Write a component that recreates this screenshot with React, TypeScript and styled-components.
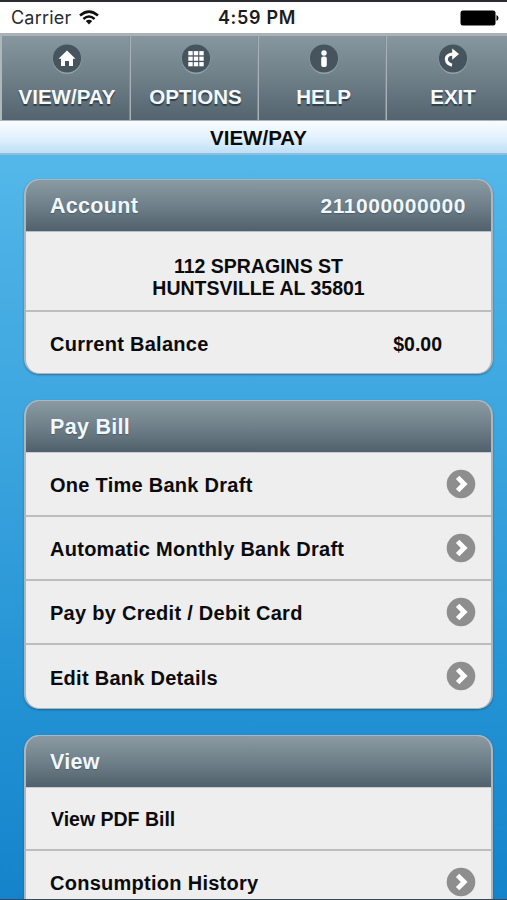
import React from "react";
import styled, { createGlobalStyle } from "styled-components";

const Global = createGlobalStyle`
  * { box-sizing: border-box; }
  html, body { margin: 0; height: 900px; overflow: hidden; }
  body { font-family: "Liberation Sans", Arial, sans-serif; color: #0b0b0d; }
`;

const Screen = styled.div`
  width: 507px;
  height: 900px;
  overflow: hidden;
  display: flex;
  flex-direction: column;
  border-top: 2px solid #2e2c30;
  border-bottom: 1px solid #34495a;
  background: linear-gradient(to bottom, #54b8ea 150px, #49afe4 260px, #3fa7e0 400px, #2191d3 715px, #1583cb 899px);
`;

const StatusBar = styled.header`
  flex: none;
  height: 31px;
  padding: 0 8px 0 11px;
  display: grid;
  grid-template-columns: 1fr auto 1fr;
  align-items: center;
  background: #fff;
  font-family: Inter, sans-serif;
  font-size: 18px;
  line-height: 30px;
`;

const Carrier = styled.div`
  display: flex;
  align-items: center;
  gap: 8px;
  letter-spacing: 0.2px;
  color: #2b2b2d;
`;

const Clock = styled.div`
  font-weight: 600;
  font-size: 18px;
  letter-spacing: 0.7px;
  padding-left: 4px;
  color: #1c1c1e;
`;

const Battery = styled.svg`
  justify-self: end;
`;

const Nav = styled.nav`
  flex: none;
  height: 88px;
  display: grid;
  grid-template-columns: 131px 128px 128px 136px;
  border-top: 3px solid #aab2b7;
  border-bottom: 1px solid #a9b6c0;
  background: linear-gradient(to bottom, #87979f, #6e7f88 50%, #53646f);
`;

const NavItem = styled.div<{ $first?: boolean }>`
  display: flex;
  flex-direction: column;
  align-items: center;
  padding-top: 8px;
  padding-left: 2px;
  border-left: ${(p) => (p.$first ? "2px solid #aeb7bc" : "none")};
  border-right: 1px solid #a6b1b7;
  box-shadow: inset -1px 0 #7f8e96;
  color: #f6faff;
  font-size: 20.5px;
  font-weight: 700;
  line-height: 24px;
  text-shadow: 0 2px 1px #2f3d48;

  &:last-child {
    padding-left: 0;
    padding-right: 3px;
  }
`;

const NavIcon = styled.svg`
  margin-bottom: 11px;
  flex: none;
`;

const TitleBar = styled.h1`
  flex: none;
  height: 34px;
  margin: 0;
  padding-left: 10px;
  border-bottom: 2px solid #90bdd9;
  background: linear-gradient(to bottom, #f8fcff, #e4f2fc 50%, #bfdff6);
  text-align: center;
  font-size: 20.5px;
  line-height: 34px;
`;

const Content = styled.main`
  flex: 1;
  min-height: 0;
  overflow: hidden;
  padding: 24px 14px 0 24px;
  display: flex;
  flex-direction: column;
  gap: 26px;
`;

const Card = styled.section`
  flex: none;
  overflow: hidden;
  border: 1px solid #a9b7c0;
  border-width: 1px 2px;
  border-radius: 15px;
  background: #eee;
  box-shadow: 0 1px 2px rgba(20, 60, 90, 0.5);
`;

const CardHeader = styled.h2`
  height: 51px;
  margin: 0;
  padding: 1px 25px 0 24px;
  display: flex;
  align-items: center;
  justify-content: space-between;
  background: linear-gradient(to bottom, #8b9aa2, #6f808a 50%, #50616d);
  color: #f1f8ff;
  font-size: 21.5px;
  letter-spacing: 0.3px;
  text-shadow: 0 1px 1px #4a5c68;
`;

const AccountNumber = styled.span`
  font-size: 21px;
  letter-spacing: 0.55px;
`;

const Row = styled.div<{ $height: number }>`
  height: ${(p) => p.$height}px;
  padding: 3px 15px 0 24px;
  display: flex;
  align-items: center;
  justify-content: space-between;
  border-top: 2px solid #bbbdbe;
  font-size: 20px;
  font-weight: 700;
  letter-spacing: 0.27px;

  ${CardHeader} + & {
    border-top-width: 1px;
    border-top-color: #c8cccf;
  }
`;

const PlainLabel = styled.span`
  margin: -2px 0 0 1px;
  font-size: 19.5px;
  letter-spacing: 0;
`;

const Address = styled.address`
  height: 79px;
  padding: 23px 0 0;
  border-top: 1px solid #b7bfc4;
  text-align: center;
  font-style: normal;
  font-weight: 700;
  font-size: 19.5px;
  line-height: 22px;
`;

const Amount = styled.span`
  margin-right: 34px;
  font-size: 19.5px;
  letter-spacing: 0;
`;

const Chevron = styled.svg`
  flex: none;
  margin-top: -4px;
`;

const Arrow = () => (
  <Chevron width="30" height="30" viewBox="0 0 30 30">
    <circle cx="15" cy="15" r="14.3" fill="#8e8e8e" />
    <path d="M11.6 8.4 L18.2 15 L11.6 21.6" fill="none" stroke="#fff" strokeWidth="4.8" />
  </Chevron>
);

const icons: Record<string, React.ReactNode> = {
  home: <path d="M15 6.5 L23.5 14.7 H21 V22 H17 V17 H13 V22 H9 V14.7 H6.5 Z" fill="#fff" />,
  grid: (
    <g fill="#fff">
      {[7.3, 12.8, 18.3].map((y) => [7.3, 12.8, 18.3].map((x) => <rect key={`${x}-${y}`} x={x} y={y - 0.2} width="4.4" height="4.2" />))}
    </g>
  ),
  info: (
    <g fill="#fff">
      <circle cx="15" cy="9" r="2.7" />
      <rect x="12.2" y="12.6" width="5.6" height="10.4" rx="2" />
    </g>
  ),
  exit: (
    <g>
      <path d="M14 21.2 C9.2 20.2 7.2 16.2 8.8 13.1 C10 10.9 12.7 10 16 10" fill="none" stroke="#fff" strokeWidth="3.2" />
      <path d="M14.2 4.6 L21 10 L14.2 15.8 Z" fill="#fff" />
    </g>
  ),
};

const navItems = [
  { icon: "home", label: "VIEW/PAY" },
  { icon: "grid", label: "OPTIONS" },
  { icon: "info", label: "HELP" },
  { icon: "exit", label: "EXIT" },
];

const payRows = [
  { label: "One Time Bank Draft", height: 63 },
  { label: "Automatic Monthly Bank Draft", height: 64 },
  { label: "Pay by Credit / Debit Card", height: 64 },
  { label: "Edit Bank Details", height: 65 },
];

export default function App() {
  return (
    <>
      <Global />
      <Screen>
        <StatusBar>
          <Carrier>
            Carrier
            <svg width="20" height="15" viewBox="0 0 20 15">
              <g fill="none" stroke="#111" strokeWidth="2.5">
                <path d="M1 5.5 Q10 -2.3 19 5.5" />
                <path d="M4.4 9 Q10 4 15.6 9" />
              </g>
              <path d="M6.8 11 Q10 8.4 13.2 11 L10 14.5 Z" fill="#111" />
            </svg>
          </Carrier>
          <Clock>4:59 PM</Clock>
          <Battery width="39" height="16" viewBox="0 0 39 16">
            <rect x="0.5" y="0.5" width="35" height="15" rx="2.5" fill="#000" />
            <path d="M36.5 5 Q38.5 6 38.5 8 Q38.5 10 36.5 11 Z" fill="#000" />
          </Battery>
        </StatusBar>
        <Nav>
          {navItems.map((item, i) => (
            <NavItem key={item.icon} $first={i === 0}>
              <NavIcon width="30" height="30" viewBox="0 0 30 30">
                <circle cx="15" cy="15.5" r="14.4" fill="#95a3aa" />
                <circle cx="15" cy="14.5" r="14.1" fill="#46545e" />
                {icons[item.icon]}
              </NavIcon>
              {item.label}
            </NavItem>
          ))}
        </Nav>
        <TitleBar>VIEW/PAY</TitleBar>
        <Content>
          <Card>
            <CardHeader>
              Account
              <AccountNumber>211000000000</AccountNumber>
            </CardHeader>
            <Address>
              112 SPRAGINS ST
              <br />
              HUNTSVILLE AL 35801
            </Address>
            <Row $height={63}>
              Current Balance
              <Amount>$0.00</Amount>
            </Row>
          </Card>
          <Card>
            <CardHeader>Pay Bill</CardHeader>
            {payRows.map((row) => (
              <Row key={row.label} $height={row.height}>
                {row.label}
                <Arrow />
              </Row>
            ))}
          </Card>
          <Card>
            <CardHeader>View</CardHeader>
            <Row $height={62}>
              <PlainLabel>View PDF Bill</PlainLabel>
            </Row>
            <Row $height={64}>
              Consumption History
              <Arrow />
            </Row>
          </Card>
        </Content>
      </Screen>
    </>
  );
}
